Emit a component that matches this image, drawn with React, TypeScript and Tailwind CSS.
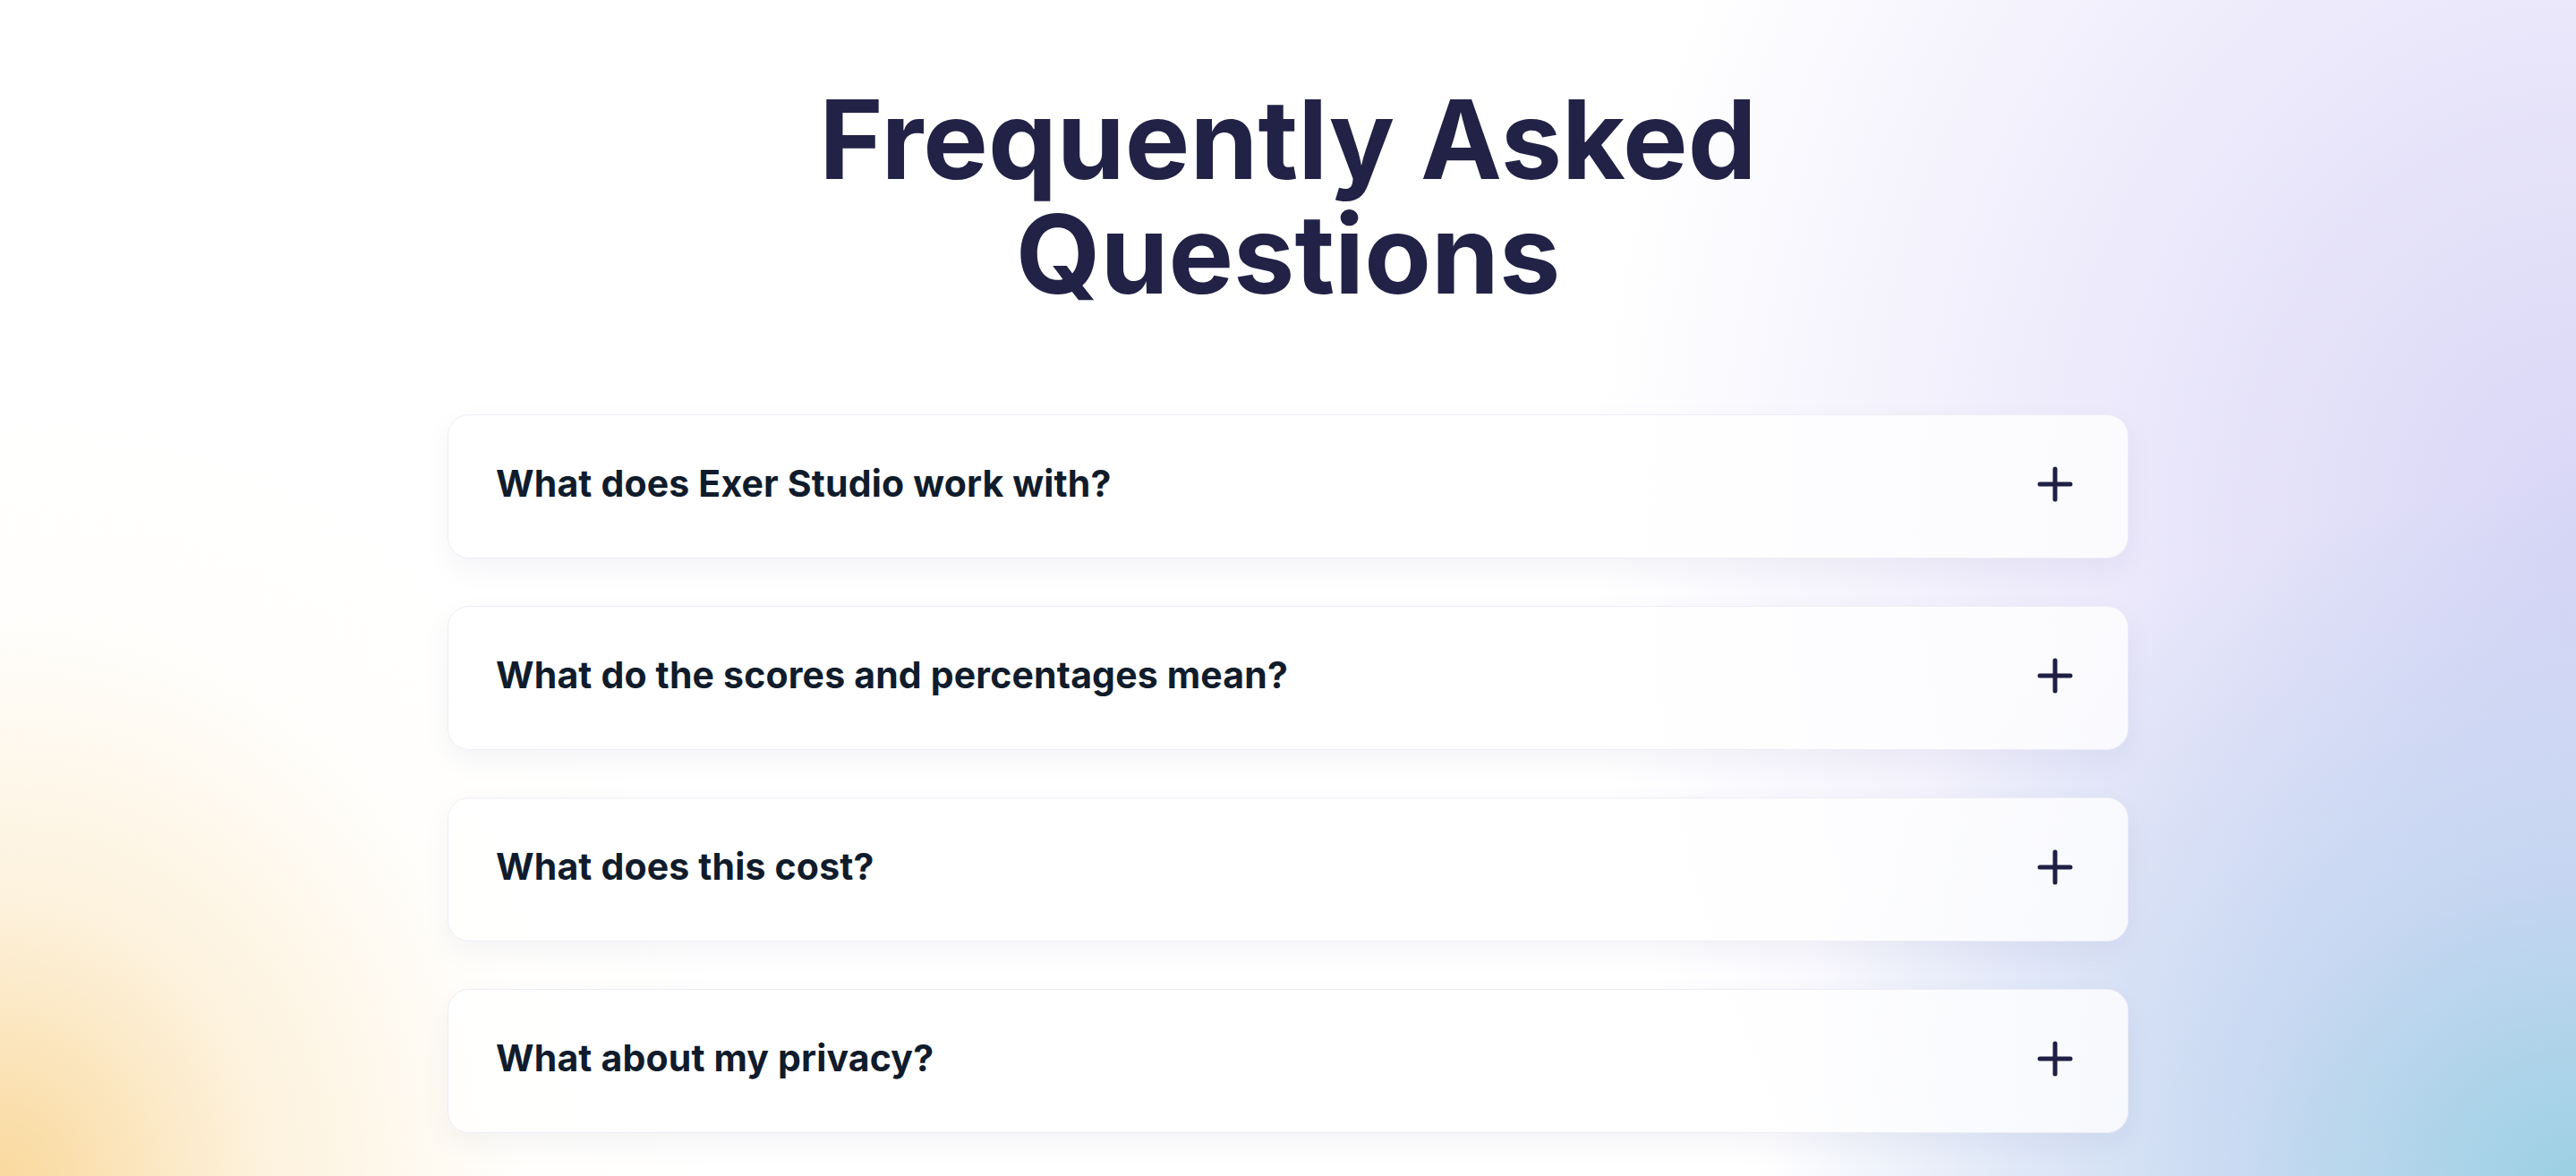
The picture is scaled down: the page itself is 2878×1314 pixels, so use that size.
import React from 'react';

const faqs = [
  'What does Exer Studio work with?',
  'What do the scores and percentages mean?',
  'What does this cost?',
  'What about my privacy?',
];

function PlusIcon() {
  return (
    <svg width="40" height="40" viewBox="0 0 40 40" fill="none" className="shrink-0">
      <path
        d="M20 3v34M3 20h34"
        stroke="#1f1f45"
        strokeWidth="5"
        strokeLinecap="round"
      />
    </svg>
  );
}

function FaqItem({ question }: { question: string }) {
  return (
    <button
      type="button"
      className="flex h-[161px] w-full items-center justify-between rounded-3xl border border-[#eeedf7] bg-white/80 pb-[6px] pl-[53px] pr-[61px] text-left shadow-[0_12px_32px_rgba(40,40,90,0.05)]"
    >
      <span className="text-[41px] font-bold tracking-[0.004em] text-[#101c2c]">{question}</span>
      <PlusIcon />
    </button>
  );
}

export default function App() {
  return (
    <div
      className="min-h-screen w-full bg-white bg-[radial-gradient(ellipse_900px_780px_at_100%_100%,rgba(155,208,227,1)_0%,rgba(178,206,236,0.6)_45%,rgba(205,212,245,0)_100%),radial-gradient(ellipse_1100px_1350px_at_100%_45%,rgba(216,214,246,1)_0%,rgba(226,222,249,0.7)_45%,rgba(240,236,252,0)_100%),radial-gradient(ellipse_820px_900px_at_0%_100%,rgba(249,214,150,0.95)_0%,rgba(251,228,185,0.5)_35%,rgba(255,248,232,0.15)_70%,rgba(255,250,240,0)_100%)]"
      style={{ fontFamily: 'Inter, "Noto Sans", sans-serif' }}
    >
      <div className="flex flex-col items-center pb-[60px] pt-[92px]">
        <h2 className="text-center text-[122px] font-bold leading-[128px] text-[#222247]">
          <span className="block">Frequently Asked</span>
          <span className="block">Questions</span>
        </h2>

        <div className="mt-[115px] flex w-[1878px] flex-col gap-[53px]">
          {faqs.map((q) => (
            <FaqItem key={q} question={q} />
          ))}
        </div>
      </div>
    </div>
  );
}
